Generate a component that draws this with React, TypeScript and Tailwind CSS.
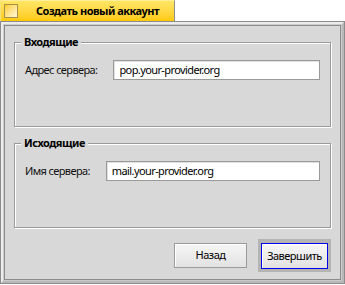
const font = { fontFamily: '"Noto Sans", "DejaVu Sans", sans-serif' }

const Group = ({ title, label, value }: { title: string; label: string; value: string }) => (
  <div className="relative h-[85px] border border-[#9a9a9a] shadow-[inset_1px_1px_0_#ffffff,1px_1px_0_#ffffff]">
    <span className="absolute left-[6px] top-[-10px] bg-[#d8d8d8] px-[3px] text-[11px] font-bold leading-[18px] tracking-[-0.5px]">
      {title}
    </span>
    <div className="flex items-center gap-[16px] pl-[10px] pr-[10px] pt-[17px]">
      <span className="text-[11px] leading-[16px] tracking-[-0.6px] text-[#111]">{label}</span>
      <div className="flex h-[20px] grow items-center border border-[#9a9a9a] bg-white pl-[5px] text-[11px] tracking-[-0.6px] shadow-[inset_1px_1px_0_#e0e0e0]">
        {value}
      </div>
    </div>
  </div>
)

export default function App() {
  return (
    <div className="flex h-[285px] w-[345px] flex-col bg-white text-black" style={font}>
      {/* tab */}
      <div className="flex h-[21px] w-[175px] items-center border-l border-r border-t border-l-[#f5e27a] border-r-[#8c8c8c] border-t-[#ffef9a] bg-gradient-to-b from-[#ffe664] to-[#ffca00] pl-[3px]">
        <div className="h-[14px] w-[14px] border border-[#a89048] bg-gradient-to-br from-[#ffcd00] to-[#fff9d8]" />
        <span className="ml-[18px] whitespace-nowrap text-[11px] font-bold leading-[14px] tracking-[-0.5px]">
          Создать новый аккаунт
        </span>
      </div>

      {/* window frame */}
      <div className="mb-[1px] flex grow flex-col border border-[#8c8c8c] bg-[#cbcbcb]">
        <div className="flex grow flex-col border-[2px] border-l-[#ececec] border-t-[#ececec] border-r-[#b8b8b8] border-b-[#b8b8b8] p-[1px]">
          <div className="flex grow flex-col border border-[#8c8c8c] bg-[#d8d8d8] px-[9px] pt-[16px]">
            <Group title="Входящие" label="Адрес сервера:" value="pop.your-provider.org" />
            <div className="h-[16px]" />
            <Group title="Исходящие" label="Имя сервера:" value="mail.your-provider.org" />

            <div className="mt-[11px] flex items-center justify-end gap-[11px]">
              <button className="h-[25px] w-[73px] border border-[#9a9a9a] bg-gradient-to-b from-[#f6f6f6] to-[#e2e2e2] text-[11px] tracking-[-0.5px] shadow-[inset_1px_1px_0_#ffffff]">
                Назад
              </button>
              <div className="bg-[#b4b4b4] p-[3px]">
                <button className="h-[26px] w-[67px] border border-[#0000e6] bg-gradient-to-b from-[#f6f6f6] to-[#e2e2e2] text-[11px] tracking-[-0.5px] shadow-[inset_1px_1px_0_#ffffff]">
                  Завершить
                </button>
              </div>
            </div>
          </div>
        </div>
      </div>
    </div>
  )
}
